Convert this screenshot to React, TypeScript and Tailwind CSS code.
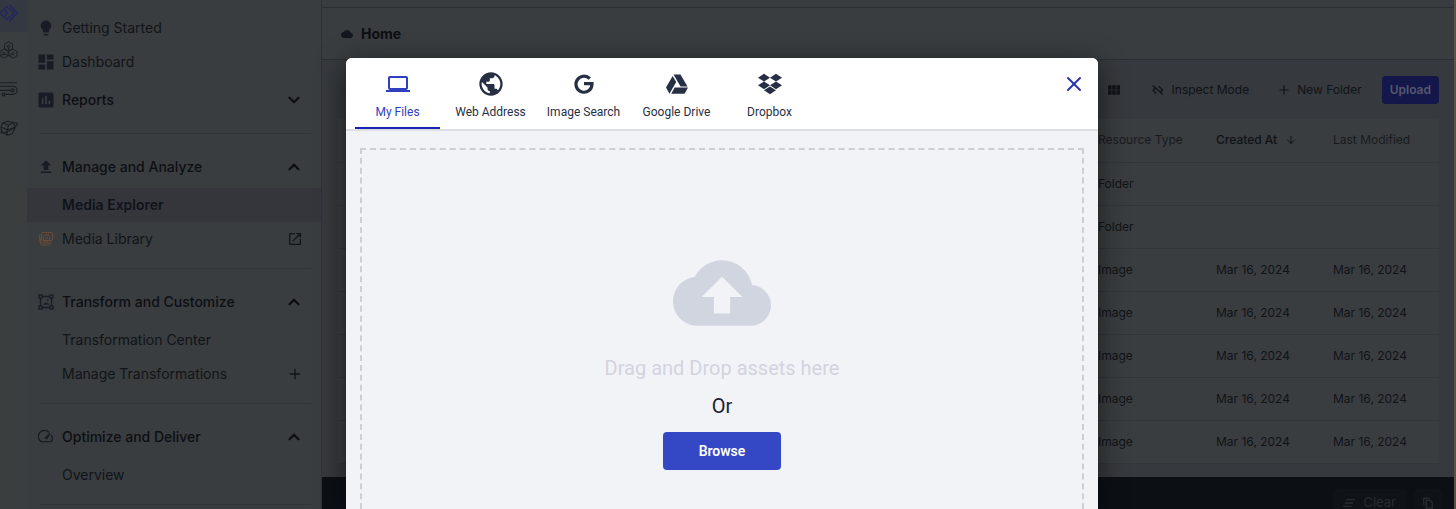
import React from "react";
import { ArrowDown, ChevronDown, ChevronUp, Plus, X } from "lucide-react";
import {
  MdAssessment,
  MdCloud,
  MdCloudUpload,
  MdDashboard,
  MdLaptop,
  MdLightbulb,
  MdOpenInNew,
  MdPublic,
  MdUpload,
  MdViewModule,
} from "react-icons/md";
import { FaDropbox, FaGoogleDrive } from "react-icons/fa";

const icons = "h-[18px] w-[18px] shrink-0";

const HexIcon = () => (
  <svg viewBox="0 0 20 20" className={icons} fill="none" stroke="currentColor">
    <path d="M9.500 1l4.500 2.500v5l-4.500 2.500L5 8.500v-5zM4.500 9L9 11.500v5L4.500 19 0 16.500v-5zM14.500 9l4.500 2.500v5L14.500 19 10 16.500v-5z" />
    <circle cx="9.500" cy="6" r="1.300" />
    <circle cx="4.500" cy="14" r="1.300" />
    <circle cx="14.500" cy="14" r="1.300" />
    <path d="M9.500 7.500V11M0 16.500l3.500-2M10 16.500l3.500-2M5.800 14.500L9 16.500" />
  </svg>
);

const FlowIcon = () => (
  <svg viewBox="0 0 20 20" className={icons} fill="none" stroke="currentColor" strokeWidth="1.200">
    <path d="M0 3h19M0 7h14.500a4.500 4.500 0 010 9H5.500M0 11.500h12.500" />
    <circle cx="14" cy="11.500" r="1.600" />
    <circle cx="4" cy="16" r="1.600" />
  </svg>
);

const PlanetIcon = () => (
  <svg viewBox="0 0 20 20" className={icons} fill="none" stroke="currentColor" strokeWidth="1.200" strokeLinejoin="round">
    <path d="M8.500 2.500L15 4l2 5.500-3.500 7L8 18l-6-4-1-5 2-4.500zM3 4.500l6.500 2.500L15 4M9.500 7L8 12l0 6M1 9l7 3 9-2.500" />
    <path d="M15 4.500c3.500-.8 5 0 4 1.800-2 3-8 6.500-13 8.500-3 1-5.500 1-5-1" />
  </svg>
);

const BrandIcon = () => (
  <svg viewBox="0 0 20 20" className="h-5 w-5" fill="none" stroke="currentColor" strokeWidth="1.400">
    <path d="M9 1.500l8.500 8.500L9 18.500M9 6l-2.500-2.500L0 10l6.500 6.500L9 14M9 5l5 5-5 5M4.500 7l3 3-3 3" />
  </svg>
);

const LibraryIcon = () => (
  <svg viewBox="0 0 16 16" className="h-4 w-4" fill="none" stroke="currentColor">
    <rect x="3.500" y="1.500" width="11" height="8" rx="1.500" />
    <path d="M2 3.500L1.500 5l1.500 6q.4 1 1.500 1h8q1 0 1.300-1.500M1 6l1.500 6.500q.4 1.500 2 1.500h6q1.500 0 2-1.500" />
    <rect x="5.500" y="4" width="6" height="6" rx="1.500" />
    <circle cx="8.500" cy="7" r="1" />
  </svg>
);

const TransformIcon = () => (
  <svg viewBox="0 0 16 16" className="h-4 w-4" fill="none" stroke="currentColor" strokeWidth="1.300">
    <path d="M4 2.500h8M4 13.500h8M2.500 4v8M13.500 4v8" />
    <rect x="1" y="1" width="3" height="3" />
    <rect x="12" y="1" width="3" height="3" />
    <rect x="1" y="12" width="3" height="3" />
    <rect x="12" y="12" width="3" height="3" />
    <path d="M5.500 10.500l1.700-2 1.300 1.200 1-1 1.500 1.800z" fill="currentColor" strokeWidth=".4" />
    <circle cx="9.700" cy="6" r=".7" fill="currentColor" strokeWidth=".3" />
  </svg>
);

const GaugeIcon = () => (
  <svg viewBox="0 0 16 16" className="h-4 w-4" fill="none" stroke="currentColor" strokeWidth="1.300" strokeLinecap="round">
    <path d="M10.500 3A6 6 0 002.300 12q.3.700 1 .7h9.400q.7 0 1-.7a6 6 0 00-.2-5.500" />
    <path d="M7.500 9l4.500-4.500L8.700 9.700z" fill="currentColor" />
  </svg>
);

const InspectIcon = () => (
  <svg viewBox="0 0 16 16" className="h-3 w-3" fill="none" stroke="currentColor" strokeWidth="1.600">
    <path d="M1 2l13.500 12M4.500 5L1.500 8.500l4 4.500M9 3l5 5-3 3" />
  </svg>
);

const GoogleIcon = () => (
  <svg viewBox="0 0 20 20" className="h-5 w-5" fill="none" stroke="currentColor" strokeWidth="3.200">
    <path d="M15.800 4.700A8 8 0 1018 10v-.3h-8" />
  </svg>
);

const ClearIcon = () => (
  <svg viewBox="0 0 14 14" className="h-3 w-3" fill="none" stroke="currentColor" strokeWidth="1.600">
    <path d="M4 3h10M2 7h10M0 11h10" />
  </svg>
);

const CopyIcon = () => (
  <svg viewBox="0 0 14 14" className="h-3 w-3" fill="none" stroke="currentColor" strokeWidth="1.600">
    <path d="M2 10V1.500h7M5 4h4.500L12 6.500V13H5z" />
  </svg>
);

type Item = { label: string; icon?: React.ReactNode; end?: React.ReactNode; active?: boolean };
type Section = { title?: Item; items: Item[] };

const sections: Section[] = [
  {
    items: [
      { label: "Getting Started", icon: <MdLightbulb className={icons} /> },
      { label: "Dashboard", icon: <MdDashboard className="h-5 w-5 shrink-0" /> },
    ],
  },
  {
    title: { label: "Manage and Analyze", icon: <MdUpload className={icons} /> },
    items: [
      { label: "Media Explorer", active: true },
      {
        label: "Media Library",
        icon: <span className="text-[#6e4a34]"><LibraryIcon /></span>,
        end: <MdOpenInNew className="h-4 w-4" />,
      },
    ],
  },
  {
    title: { label: "Transform and Customize", icon: <TransformIcon /> },
    items: [
      { label: "Transformation Center" },
      { label: "Manage Transformations", end: <Plus className="h-4 w-4" /> },
    ],
  },
  {
    title: { label: "Optimize and Deliver", icon: <GaugeIcon /> },
    items: [{ label: "Overview" }],
  },
];

const NavLink = ({ label, icon, end, active }: Item) => (
  <a
    href="#"
    className={`flex h-[34px] items-center pr-[18px] pl-[9px] ${
      active ? "bg-[#34363c] font-semibold text-[#10131b]" : "text-[#111419]"
    }`}
  >
    <span className="mr-1.5 flex w-5 justify-center text-[#191c24]">{icon}</span>
    {label}
    <span className="ml-auto">{end}</span>
  </a>
);

const NavHeader = ({ label, icon, closed }: Item & { closed?: boolean }) => (
  <button className="flex h-[42px] w-full items-center pr-[18px] pl-[9px] font-medium text-[#0d0f14]">
    <span className="mr-1.5 flex w-5 justify-center text-[#191c24]">{icon}</span>
    {label}
    <span className="ml-auto">
      {closed ? (
        <ChevronDown className="h-[18px] w-[18px]" strokeWidth={3} />
      ) : (
        <ChevronUp className="h-[18px] w-[18px]" strokeWidth={3} />
      )}
    </span>
  </button>
);

const Divider = () => <hr className="my-3 mr-2.5 ml-3 border-[#31353b]" />;

const Sidebar = () => (
  <nav className="w-[295px] shrink-0 border-r border-[#2e3236] bg-[#393d3f] pt-[11px] text-sm">
    {sections.map((section, i) => (
      <div key={i}>
        {section.title && <NavHeader {...section.title} />}
        {section.items.map((item) => (
          <NavLink key={item.label} {...item} />
        ))}
        {i === 0 && <NavHeader label="Reports" icon={<MdAssessment className="h-5 w-5" />} closed />}
        <Divider />
      </div>
    ))}
  </nav>
);

const rows = [
  { type: "Folder", date: "" },
  { type: "Folder", date: "" },
  { type: "Image", date: "Mar 16, 2024" },
  { type: "Image", date: "Mar 16, 2024" },
  { type: "Image", date: "Mar 16, 2024" },
  { type: "Image", date: "Mar 16, 2024" },
  { type: "Image", date: "Mar 16, 2024" },
];

const Explorer = () => (
  <main className="flex min-w-0 flex-1 flex-col border-r-2 border-[#5a5148] bg-[#36393d]">
    <div className="h-2 border-b border-[#2b2f35] bg-[#393d3f]" />
    <header className="flex h-[52px] items-center gap-2 border-b border-[#2b2f35] bg-[#393d3f] pl-[19px] text-sm font-bold text-[#0c0e13]">
      <MdCloud className="h-3 w-3 text-[#14171d]" />
      Home
    </header>
    <div className="flex h-[59px] items-center justify-end pr-[15px] text-xs text-[#101318]">
      <button aria-label="Grid view" className="mr-[30px]">
        <MdViewModule className="h-4 w-4" />
      </button>
      <button className="mr-7 flex items-center gap-2">
        <InspectIcon />
        Inspect Mode
      </button>
      <button className="mr-5 flex items-center gap-1.5">
        <Plus className="h-3.5 w-3.5" />
        New Folder
      </button>
      <button className="h-7 rounded bg-[#14174a] px-2 font-semibold text-[#55586d]">Upload</button>
    </div>
    <div className="flex-1 pr-[15px] pl-4">
      <table className="w-full table-fixed bg-[#3a3d3f] text-left text-xs text-[#101318]">
        <colgroup>
          <col />
          <col className="w-[118px]" />
          <col className="w-[117px]" />
          <col className="w-[106px]" />
        </colgroup>
        <thead>
          <tr className="h-[43px] border-b border-[#323639] text-[#181b21]">
            <th />
            <th className="font-normal">Resource Type</th>
            <th className="font-medium text-[#0f1217]">
              <span className="flex items-center gap-2">
                Created At <ArrowDown className="h-3 w-3" />
              </span>
            </th>
            <th className="font-normal">Last Modified</th>
          </tr>
        </thead>
        <tbody>
          {rows.map((row, i) => (
            <tr key={i} className="h-[43px] border-b border-[#323639]">
              <td />
              <td>{row.type}</td>
              <td>{row.date}</td>
              <td>{row.date}</td>
            </tr>
          ))}
        </tbody>
      </table>
    </div>
    <footer className="flex h-8 shrink-0 items-start justify-end gap-2 overflow-hidden bg-[#0c1015] pt-3 pr-3 text-[13px] text-[#282b30]">
      <button className="flex h-7 items-center gap-2 rounded bg-[#0f1318] px-2.5">
        <ClearIcon />
        Clear
      </button>
      <button aria-label="Copy" className="flex h-7 items-center rounded bg-[#0f1318] px-2">
        <CopyIcon />
      </button>
    </footer>
  </main>
);

const sources = [
  { label: "My Files", icon: <MdLaptop className="h-6 w-6" /> },
  { label: "Web Address", icon: <MdPublic className="h-7 w-7" /> },
  { label: "Image Search", icon: <GoogleIcon /> },
  { label: "Google Drive", icon: <FaGoogleDrive className="h-[22px] w-[22px]" /> },
  { label: "Dropbox", icon: <FaDropbox className="h-6 w-6" /> },
];

const UploadDialog = () => (
  <div
    role="dialog"
    aria-label="Upload"
    className="mt-[58px] flex w-[752px] flex-col overflow-hidden rounded-t-md bg-[#f2f3f7] font-['Roboto',sans-serif] shadow-[0_6px_28px_rgba(0,0,0,0.55)]"
  >
    <div className="flex h-[73px] shrink-0 justify-between border-b-2 border-[#dcdee4] bg-white pr-3 pl-[5px]">
      <div className="flex">
        {sources.map((source, i) => (
          <button
            key={source.label}
            className={`mx-1 flex w-[85px] flex-col items-center border-b-2 pt-3 text-xs whitespace-nowrap ${
              i === 0 ? "border-[#1a23b0] text-[#2f3fc0]" : "border-transparent text-[#272f45]"
            }`}
          >
            <span className="mb-1.5 flex h-7 items-center">{source.icon}</span>
            {source.label}
          </button>
        ))}
      </div>
      <button aria-label="Close" className="mt-3.5 h-6 text-[#2733b4]">
        <X className="h-6 w-6" />
      </button>
    </div>
    <div className="mx-3.5 mt-[17px] flex flex-1 flex-col items-center border-2 border-b-0 border-dashed border-[#cdcfd6] pt-[94px]">
      <MdCloudUpload className="h-[98px] w-[98px] text-[#d1d5e0]" />
      <p className="mt-3 text-xl text-[#d1d4de]">Drag and Drop assets here</p>
      <p className="mt-2.5 text-xl text-[#1b2133]">Or</p>
      <button className="mt-3 h-[38px] w-[118px] rounded bg-[#3448c5] text-sm font-semibold text-white">
        Browse
      </button>
    </div>
  </div>
);

export default function App() {
  return (
    <div className="relative h-screen overflow-hidden bg-[#3a3e3f] font-['Inter',sans-serif]">
      <div className="flex h-full">
        <aside className="flex w-[27px] shrink-0 flex-col gap-[21px] text-[#1b1e24]">
          <a href="#" aria-label="Home" className="-mb-3 flex h-8 items-center bg-[#343840] pb-1.5 text-[#23275c]">
            <BrandIcon />
          </a>
          <HexIcon />
          <FlowIcon />
          <PlanetIcon />
        </aside>
        <Sidebar />
        <Explorer />
      </div>
      <div className="absolute inset-0 flex justify-center pr-3">
        <UploadDialog />
      </div>
    </div>
  );
}
